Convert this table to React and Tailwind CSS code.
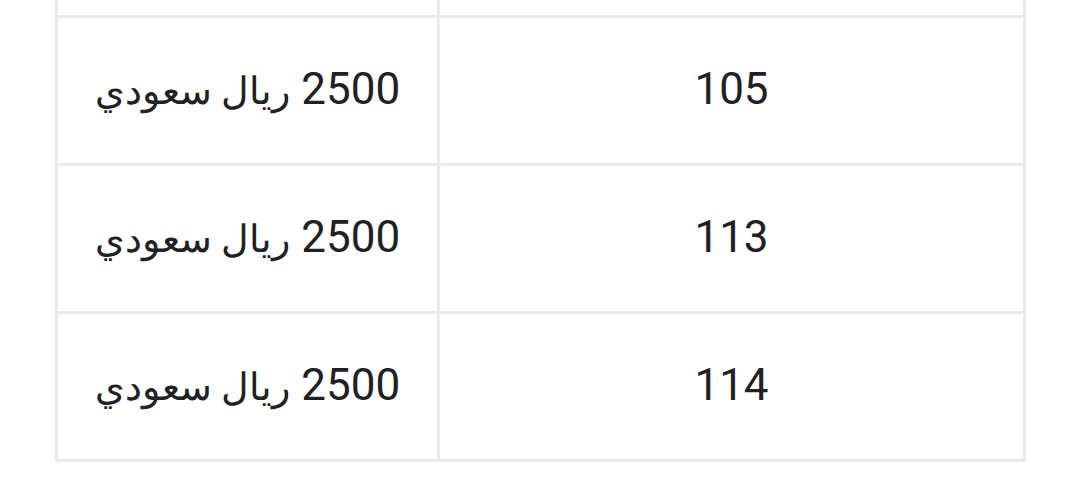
export default function App() {
  const rows = ["105", "113", "114"];
  return (
    <div className="w-[1080px] h-[494px] bg-white overflow-hidden" style={{ fontFamily: 'Roboto, "Noto Sans", sans-serif' }}>
      <div dir="rtl" className="ml-[55px] w-[971px] border-x-[3px] border-[#e8eaed] text-[#202124]">
        <div className="flex h-[18px] border-b-[3px] border-[#e8eaed]">
          <div className="w-[586px] border-l-[3px] border-[#e8eaed]"></div>
          <div className="flex-1"></div>
        </div>
        {rows.map((n) => (
          <div key={n} className="flex h-[148px] border-b-[3px] border-[#e8eaed]">
            <div className="w-[586px] border-l-[3px] border-[#e8eaed] flex items-center justify-center text-[44px] leading-none pb-[4px]">
              {n}
            </div>
            <div className="flex-1 flex items-center justify-center text-[44px] leading-none pb-[4px]">
              <span>2500 <span className="text-[38px]">ريال سعودي</span></span>
            </div>
          </div>
        ))}
      </div>
    </div>
  );
}
